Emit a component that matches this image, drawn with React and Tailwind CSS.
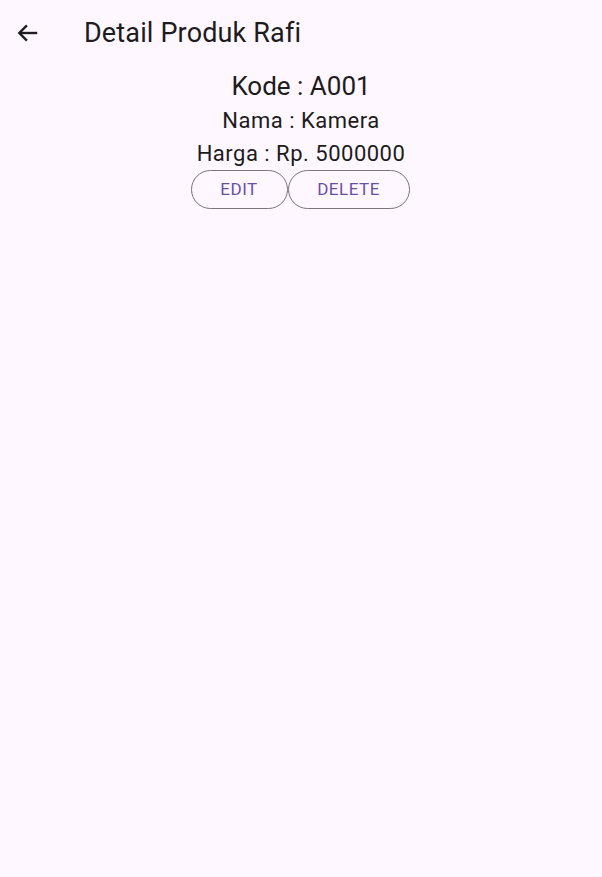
import React from 'react'

function App() {
  return (
    <div className="min-h-screen bg-[#fef7ff] text-[#1d1b20]" style={{ fontFamily: 'Roboto, sans-serif' }}>
      {/* app bar */}
      <div className="h-[66px] flex items-center">
        <button className="w-[56px] h-[56px] flex items-center justify-center">
          <svg width="26" height="26" viewBox="0 0 24 24" fill="none" stroke="#1d1b20" strokeWidth="2.2">
            <path d="M20.5 12H4" />
            <path d="M11 5l-7 7 7 7" />
          </svg>
        </button>
        <h1 className="ml-[28px] text-[27px] tracking-[0.15px] leading-none">Detail Produk Rafi</h1>
      </div>

      <div className="flex flex-col items-center pt-[2px]">
        <p className="text-[26px] leading-[36px]">Kode : A001</p>
        <p className="text-[22px] leading-[33px] tracking-[0.5px]">Nama : Kamera</p>
        <p className="text-[22px] leading-[33px] tracking-[0.5px]">Harga : Rp. 5000000</p>
        <div className="flex mr-[2px]">
          <button className="h-[39px] w-[97px] rounded-full border border-[#79747e] text-[#6750a4] text-[17px] tracking-[0.5px]">
            EDIT
          </button>
          <button className="h-[39px] w-[122px] rounded-full border border-[#79747e] text-[#6750a4] text-[17px] tracking-[0.5px]">
            DELETE
          </button>
        </div>
      </div>
    </div>
  )
}

export default App
